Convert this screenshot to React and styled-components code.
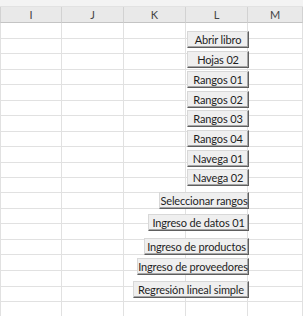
import React from "react";
import styled, { createGlobalStyle } from "styled-components";

const GlobalStyle = createGlobalStyle`
  html, body {
    margin: 0;
    padding: 0;
    background: #ffffff;
  }
`;

const Sheet = styled.div`
  position: relative;
  width: 303px;
  height: 316px;
  overflow: hidden;
  background: #ffffff;
  font-family: Lato, "Open Sans", sans-serif;
`;

const TopStrip = styled.div`
  height: 7px;
  background: #f3f3f3;
  border-bottom: 1px solid #e2e2e2;
  box-sizing: border-box;
`;

const Grid = styled.div`
  display: grid;
  grid-template-columns: 62px 62px 62px 62px 1fr;
`;

const HeaderCell = styled.div`
  height: 16px;
  box-sizing: border-box;
  background: #e9e9e9;
  border-right: 1px solid #d2d2d2;
  border-bottom: 1px solid #c4c4c4;
  ${({ $first }) => $first && "border-left: 1px solid #d2d2d2;"}
  display: flex;
  align-items: center;
  justify-content: center;
  font-size: 11px;
  color: #444;
`;

const Cell = styled.div`
  height: ${({ $h }) => $h}px;
  box-sizing: border-box;
  border-right: 1px solid #e1e1e1;
  border-bottom: 1px solid #e1e1e1;
  ${({ $first }) => $first && "border-left: 1px solid #e1e1e1;"}
`;

const ButtonLayer = styled.div`
  position: absolute;
  top: 0;
  left: 0;
  width: 249px;
  display: flex;
  flex-direction: column;
  align-items: flex-end;
`;

const MacroButton = styled.div`
  margin-top: ${({ $mt }) => $mt}px;
  width: ${({ $w }) => $w}px;
  height: 17px;
  box-sizing: border-box;
  background: #efefef;
  border-top: 1px solid #d8d8d8;
  border-left: 1px solid #d8d8d8;
  border-right: 1px solid #5e5e5e;
  border-bottom: 1px solid #5e5e5e;
  box-shadow: inset -1px -1px 0 #a6a6a6;
  display: flex;
  align-items: center;
  justify-content: center;
  font-size: 11px;
  letter-spacing: -0.15px;
  color: #1e1e1e;
  white-space: nowrap;
`;

const columns = ["I", "J", "K", "L", "M"];
const rowHeights = [16, 15, 16, 15, 16, 15, 16, 15, 16, 15, 15, 16, 15, 16, 15, 16, 16, 15, 16];

const buttons = [
  { label: "Abrir libro", w: 62, mt: 31 },
  { label: "Hojas 02", w: 62, mt: 3 },
  { label: "Rangos 01", w: 62, mt: 3 },
  { label: "Rangos 02", w: 62, mt: 3 },
  { label: "Rangos 03", w: 62, mt: 2 },
  { label: "Rangos 04", w: 62, mt: 3 },
  { label: "Navega 01", w: 62, mt: 3 },
  { label: "Navega 02", w: 62, mt: 2 },
  { label: "Seleccionar rangos", w: 90, mt: 6 },
  { label: "Ingreso de datos 01", w: 101, mt: 5 },
  { label: "Ingreso de productos", w: 105, mt: 7 },
  { label: "Ingreso de proveedores", w: 112, mt: 3 },
  { label: "Regresión lineal simple", w: 116, mt: 6 },
];

export default function App() {
  return (
    <Sheet>
      <GlobalStyle />
      <TopStrip />
      <Grid>
        {columns.map((c, i) => (
          <HeaderCell key={c} $first={i === 0}>{c}</HeaderCell>
        ))}
        {rowHeights.map((h, r) =>
          columns.map((c, i) => <Cell key={r + c} $h={h} $first={i === 0} />)
        )}
      </Grid>
      <ButtonLayer>
        {buttons.map((b) => (
          <MacroButton key={b.label} $w={b.w} $mt={b.mt}>{b.label}</MacroButton>
        ))}
      </ButtonLayer>
    </Sheet>
  );
}
